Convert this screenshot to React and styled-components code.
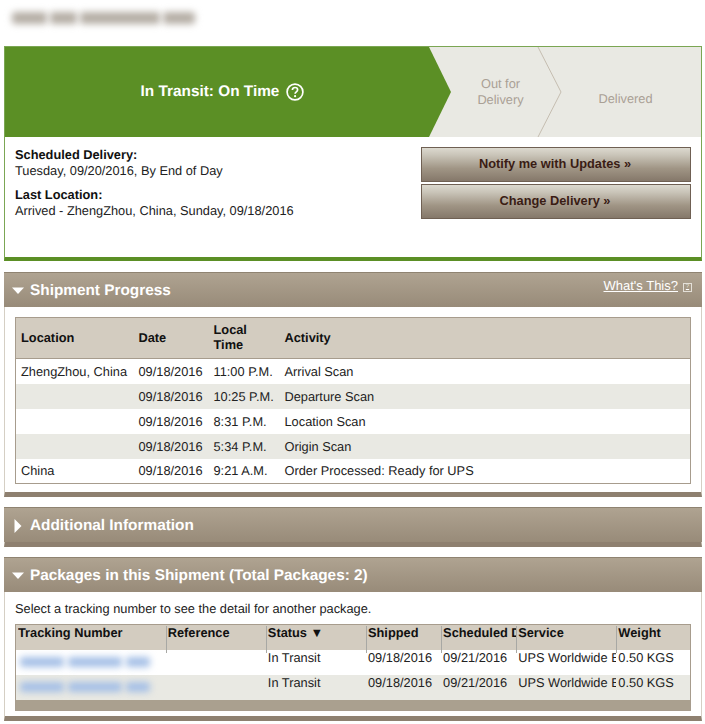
import React from "react";
import styled, { createGlobalStyle } from "styled-components";

const Global = createGlobalStyle`
  html, body { margin: 0; padding: 0; background: #fff; }
  body {
    font-family: "Liberation Sans", Arial, sans-serif;
    font-size: 12.8px;
    color: #1c1c1c;
    text-rendering: geometricPrecision;
  }
  * { box-sizing: border-box; }
`;

const Page = styled.div`
  width: 705px;
  height: 724px;
  overflow: hidden;
  padding: 7px 3px 0 4px;
  display: flex;
  flex-direction: column;
`;

const BlurBar = styled.div`
  display: flex;
  gap: ${(p) => p.$gap}px;
  width: ${(p) => p.$width}px;
  height: ${(p) => p.$height}px;
  padding: ${(p) => p.$pad};
  background: ${(p) => p.$bg || "transparent"};
  & > span {
    height: 100%;
    background: ${(p) => p.$color};
    filter: blur(${(p) => p.$blur}px);
    border-radius: 3px;
  }
`;

const TopBlur = styled(BlurBar)`
  margin-left: 5px;
  margin-bottom: 17px;
`;

const StatusCard = styled.section`
  height: 215px;
  border: 1px solid #7ba653;
  border-bottom: 4px solid #5b8f25;
  display: flex;
  flex-direction: column;
`;

const Banner = styled.div`
  height: 90px;
  display: flex;
  background: #e9e9e3;
`;

const ActiveStep = styled.div`
  flex: 0 0 446px;
  background: #5b8f25;
  clip-path: polygon(0 0, 424px 0, 446px 45px, 424px 90px, 0 90px);
  color: #fff;
  font-weight: 700;
  font-size: 15.36px;
  display: flex;
  align-items: center;
  justify-content: center;
  gap: 7px;
  padding-right: 11px;
`;

const Step = styled.div`
  flex: ${(p) => p.$flex};
  position: relative;
  display: flex;
  align-items: center;
  justify-content: center;
  text-align: center;
  color: #aaa095;
  font-size: 12.8px;
  line-height: 16px;
  padding: ${(p) => p.$pad};
`;

const ChevronLine = styled.svg`
  position: absolute;
  right: 0;
  top: 0;
`;

const Details = styled.div`
  flex: 1;
  display: flex;
  justify-content: space-between;
  padding: 10px 10px 0 10px;
`;

const Facts = styled.div`
  line-height: 16px;
`;

const Fact = styled.p`
  margin: 0 0 8px;
  color: #222;
`;

const Strong = styled.strong`
  display: block;
  font-weight: 700;
  color: #111;
`;

const Actions = styled.div`
  display: flex;
  flex-direction: column;
  gap: 2px;
  width: 270px;
`;

const ActionButton = styled.button`
  height: 35px;
  border: 1px solid #6f6053;
  border-radius: 0;
  background: linear-gradient(#dcd9cf 0%, #c9c4b8 22%, #a09585 62%, #85786a 100%);
  color: #3a1c14;
  font-family: inherit;
  font-weight: 700;
  font-size: 12.8px;
  padding: 0 2px 2px 0;
`;

const Panel = styled.section`
  margin-top: ${(p) => p.$top}px;
  height: ${(p) => p.$height}px;
  border: 1px solid #d5cfc4;
  border-top: 0;
  border-bottom: 5px solid #8e8070;
  display: flex;
  flex-direction: column;
`;

const PanelHeader = styled.header`
  flex: 0 0 ${(p) => p.$height}px;
  margin: 0 -1px;
  border-top: 1px solid #8f8371;
  background: linear-gradient(#afa391, #988b79);
  display: flex;
  align-items: center;
  justify-content: space-between;
  padding: 1px 10px 0 7px;
`;

const PanelTitle = styled.h2`
  margin: 0;
  display: flex;
  align-items: center;
  gap: 5px;
  color: #fff;
  font-size: 15.36px;
  font-weight: 700;
  line-height: 20px;
`;

const HelpLink = styled.a`
  align-self: flex-start;
  margin-top: 3px;
  display: flex;
  align-items: center;
  gap: 5px;
  color: #fff;
  font-size: 13px;
  line-height: 18px;
  text-decoration: underline;
`;

const HelpBox = styled.span`
  width: 9px;
  height: 9px;
  margin-top: 2px;
  border: 1px solid #e4e0d8;
  color: #e4e0d8;
  font-size: 6px;
  line-height: 7px;
  text-align: center;
`;

const PanelBody = styled.div`
  flex: 1;
  padding: ${(p) => p.$pad};
`;

const ProgressTable = styled.table`
  width: 100%;
  border-collapse: collapse;
  border: 1px solid #a79c8d;
  table-layout: fixed;
  color: #222;

  th {
    background: #d3ccc0;
    height: 41px;
    padding: 0 0 2px 5px;
    border-bottom: 1px solid #a79c8d;
    text-align: left;
    line-height: 15px;
    color: #111;
    font-weight: 700;
  }
  td {
    height: 25px;
    padding: 0 0 0 5px;
    white-space: nowrap;
  }
  tbody tr:nth-child(even) td { background: #e9e9e3; }
`;

const Intro = styled.p`
  margin: 0 0 7px;
  line-height: 16px;
  color: #222;
`;

const PackagesTable = styled.table`
  width: 100%;
  border-collapse: collapse;
  border: 1px solid #a79c8d;
  table-layout: fixed;
  color: #222;

  th {
    position: relative;
    background: #d3ccc0;
    height: 25px;
    padding: 0 0 9px 2px;
    text-align: left;
    line-height: 15px;
    color: #111;
    font-weight: 700;
    white-space: nowrap;
    overflow: visible;
  }
  td {
    height: 25px;
    padding: 0 0 9px 2px;
    line-height: 15px;
    white-space: nowrap;
    overflow: hidden;
  }
  td:first-child { padding: 0; }
  tbody tr:nth-child(even) td { background: #e9e9e3; }
  tfoot td { background: #aaa08f; height: 11px; padding: 0; }
`;

const Clip = styled.span`
  display: block;
  overflow: hidden;
`;

const Resizer = styled.i`
  position: absolute;
  left: 0;
  top: 1px;
  width: 1px;
  height: 27px;
  background: #a8a8a4;
`;

const LinkBlur = styled(BlurBar)`
  margin: 0 0 0 1px;
`;

const Caret = ({ open }) => (
  <svg width="14" height="14" viewBox="0 0 14 14" aria-hidden="true">
    {open ? (
      <path d="M1 3.5h12L7 10z" fill="#fff" />
    ) : (
      <path d="M3.5 0v14l7-7z" fill="#fff" />
    )}
  </svg>
);

const HelpCircle = () => (
  <svg width="18" height="18" viewBox="0 0 18 18" aria-hidden="true">
    <circle cx="9" cy="9" r="7.9" fill="none" stroke="#fff" strokeWidth="1.7" />
    <path d="M6.4 7c0-1.6 1.1-2.5 2.6-2.5s2.6.9 2.6 2.3c0 2-2.5 2-2.5 3.9" fill="none" stroke="#fff" strokeWidth="1.7" />
    <circle cx="9.1" cy="13.2" r="1.1" fill="#fff" />
  </svg>
);

const progress = [
  ["ZhengZhou, China", "09/18/2016", "11:00 P.M.", "Arrival Scan"],
  ["", "09/18/2016", "10:25 P.M.", "Departure Scan"],
  ["", "09/18/2016", "8:31 P.M.", "Location Scan"],
  ["", "09/18/2016", "5:34 P.M.", "Origin Scan"],
  ["China", "09/18/2016", "9:21 A.M.", "Order Processed: Ready for UPS"],
];

const packageCols = [
  ["Tracking Number", 150],
  ["Reference", 100],
  ["Status ▼", 100],
  ["Shipped", 75],
  ["Scheduled Delivery", 75],
  ["Service", 100],
  ["Weight", 74],
];

const NumberBlur = () => (
  <LinkBlur $width={138} $height={24} $gap={4} $pad="7px 3px" $color="#a4bfe6" $blur={3.5}>
    <span style={{ width: 44 }} />
    <span style={{ width: 54 }} />
    <span style={{ width: 24 }} />
  </LinkBlur>
);

export default function App() {
  return (
    <Page>
      <Global />
      <TopBlur $width={190} $height={22} $gap={3} $pad="5px 3px" $color="#b5aea5" $blur={3.5}>
        <span style={{ width: 35 }} />
        <span style={{ width: 27 }} />
        <span style={{ width: 80 }} />
        <span style={{ width: 32 }} />
      </TopBlur>

      <StatusCard>
        <Banner>
          <ActiveStep>
            In Transit: On Time <HelpCircle />
          </ActiveStep>
          <Step $flex="0 0 111px" $pad="0 12px 0 0">
            Out for
            <br />
            Delivery
            <ChevronLine width="25" height="90" viewBox="0 0 25 90" aria-hidden="true">
              <path d="M1 0L24 45L1 90" fill="none" stroke="#c5bdb0" strokeWidth="1" />
            </ChevronLine>
          </Step>
          <Step $flex="1" $pad="14px 12px 0 0">Delivered</Step>
        </Banner>
        <Details>
          <Facts>
            <Fact>
              <Strong>Scheduled Delivery:</Strong>
              Tuesday, 09/20/2016, By End of Day
            </Fact>
            <Fact>
              <Strong>Last Location:</Strong>
              Arrived - ZhengZhou, China, Sunday, 09/18/2016
            </Fact>
          </Facts>
          <Actions>
            <ActionButton>Notify me with Updates »</ActionButton>
            <ActionButton>Change Delivery »</ActionButton>
          </Actions>
        </Details>
      </StatusCard>

      <Panel $top={11} $height={225}>
        <PanelHeader $height={35}>
          <PanelTitle>
            <Caret open /> Shipment Progress
          </PanelTitle>
          <HelpLink href="#">
            What's This? <HelpBox>?</HelpBox>
          </HelpLink>
        </PanelHeader>
        <PanelBody $pad="10px 10px 0">
          <ProgressTable>
            <colgroup>
              <col style={{ width: 118 }} />
              <col style={{ width: 75 }} />
              <col style={{ width: 71 }} />
              <col />
            </colgroup>
            <thead>
              <tr>
                <th>Location</th>
                <th>Date</th>
                <th>Local<br />Time</th>
                <th>Activity</th>
              </tr>
            </thead>
            <tbody>
              {progress.map((r, i) => (
                <tr key={i}>
                  {r.map((c, j) => (
                    <td key={j}>{c}</td>
                  ))}
                </tr>
              ))}
            </tbody>
          </ProgressTable>
        </PanelBody>
      </Panel>

      <Panel $top={10} $height={40}>
        <PanelHeader $height={35}>
          <PanelTitle>
            <Caret /> Additional Information
          </PanelTitle>
        </PanelHeader>
      </Panel>

      <Panel $top={10} $height={164}>
        <PanelHeader $height={35}>
          <PanelTitle>
            <Caret open /> Packages in this Shipment (Total Packages: 2)
          </PanelTitle>
        </PanelHeader>
        <PanelBody $pad="9px 10px 0">
          <Intro>Select a tracking number to see the detail for another package.</Intro>
          <PackagesTable>
            <colgroup>
              {packageCols.map(([, w], i) => (
                <col key={i} style={{ width: w }} />
              ))}
            </colgroup>
            <thead>
              <tr>
                {packageCols.map(([t], i) => (
                  <th key={i}>
                    {i > 0 && <Resizer />}
                    <Clip>{t}</Clip>
                  </th>
                ))}
              </tr>
            </thead>
            <tbody>
              {[0, 1].map((i) => (
                <tr key={i}>
                  <td><NumberBlur /></td>
                  <td />
                  <td>In Transit</td>
                  <td>09/18/2016</td>
                  <td>09/21/2016</td>
                  <td>UPS Worldwide Expedited</td>
                  <td>0.50 KGS</td>
                </tr>
              ))}
            </tbody>
            <tfoot>
              <tr>
                <td colSpan={7} />
              </tr>
            </tfoot>
          </PackagesTable>
        </PanelBody>
      </Panel>
    </Page>
  );
}
